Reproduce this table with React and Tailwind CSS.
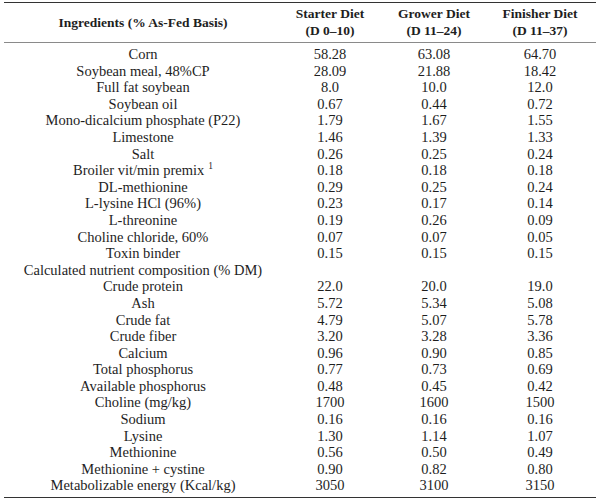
import React from "react";

const rows = [
  ["Corn", "58.28", "63.08", "64.70"],
  ["Soybean meal, 48%CP", "28.09", "21.88", "18.42"],
  ["Full fat soybean", "8.0", "10.0", "12.0"],
  ["Soybean oil", "0.67", "0.44", "0.72"],
  ["Mono-dicalcium phosphate (P22)", "1.79", "1.67", "1.55"],
  ["Limestone", "1.46", "1.39", "1.33"],
  ["Salt", "0.26", "0.25", "0.24"],
  ["Broiler vit/min premix", "0.18", "0.18", "0.18", true],
  ["DL-methionine", "0.29", "0.25", "0.24"],
  ["L-lysine HCl (96%)", "0.23", "0.17", "0.14"],
  ["L-threonine", "0.19", "0.26", "0.09"],
  ["Choline chloride, 60%", "0.07", "0.07", "0.05"],
  ["Toxin binder", "0.15", "0.15", "0.15"],
  ["Calculated nutrient composition (% DM)", "", "", ""],
  ["Crude protein", "22.0", "20.0", "19.0"],
  ["Ash", "5.72", "5.34", "5.08"],
  ["Crude fat", "4.79", "5.07", "5.78"],
  ["Crude fiber", "3.20", "3.28", "3.36"],
  ["Calcium", "0.96", "0.90", "0.85"],
  ["Total phosphorus", "0.77", "0.73", "0.69"],
  ["Available phosphorus", "0.48", "0.45", "0.42"],
  ["Choline (mg/kg)", "1700", "1600", "1500"],
  ["Sodium", "0.16", "0.16", "0.16"],
  ["Lysine", "1.30", "1.14", "1.07"],
  ["Methionine", "0.56", "0.50", "0.49"],
  ["Methionine + cystine", "0.90", "0.82", "0.80"],
  ["Metabolizable energy (Kcal/kg)", "3050", "3100", "3150"],
];

const cols = "grid grid-cols-[278px_96px_112px_100px]";

export default function App() {
  return (
    <div className="w-[600px] h-[501px] bg-white pt-[2px] px-[4px] text-[#1e1e1e] font-['Liberation_Serif',serif] text-[14.5px]">
      <div className="border-t-[1.5px] border-b-[1.5px] border-[#333]">
        <div className={`${cols} h-[39.5px] border-b border-[#8a8a8a] font-bold text-[13.5px] leading-[17px] items-center`}>
          <div className="text-center">Ingredients (% As-Fed Basis)</div>
          <div className="text-center">Starter Diet<br />(D 0–10)</div>
          <div className="text-center">Grower Diet<br />(D 11–24)</div>
          <div className="text-center">Finisher Diet<br />(D 11–37)</div>
        </div>
        <div className="pt-[3.5px] pb-[3px]">
          {rows.map((r, i) => (
            <div key={i} className={`${cols} h-[16.6px] leading-[16.6px]`}>
              <div className="text-center whitespace-nowrap">
                {r[0]}
                {r[4] && <span className="text-[9.5px] ml-[4px] relative top-[-6px]">1</span>}
              </div>
              <div className="text-center">{r[1]}</div>
              <div className="text-center">{r[2]}</div>
              <div className="text-center">{r[3]}</div>
            </div>
          ))}
        </div>
      </div>
    </div>
  );
}
